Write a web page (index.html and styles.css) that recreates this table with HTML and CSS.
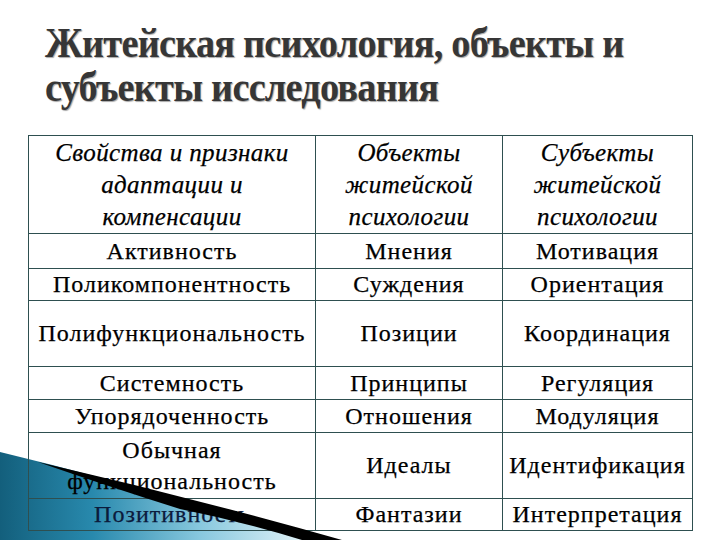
FILE: index.html
```html
<!DOCTYPE html>
<html lang="ru">
<head>
<meta charset="utf-8">
<link rel="stylesheet" href="styles.css">
</head>
<body>
<div class="slide">
  <svg class="wedge wedge-back" width="360" height="100" viewBox="0 440 360 100" xmlns="http://www.w3.org/2000/svg">
    <defs>
      <linearGradient id="wg" x1="0" y1="0" x2="1" y2="0">
        <stop offset="0" stop-color="#135f7c"/>
        <stop offset="0.3" stop-color="#2889ad"/>
        <stop offset="0.65" stop-color="#88c8de"/>
        <stop offset="1" stop-color="#e4f3f8"/>
      </linearGradient>
    </defs>
    <path d="M0 452 Q150 488 308 540 L0 540 Z" fill="url(#wg)"/>
  </svg>
  <h1 class="title">
    <span class="title-line">Житейская психология, объекты и</span>
    <span class="title-line">субъекты исследования</span>
  </h1>
  <table class="grid">
    <colgroup><col class="c1"><col class="c2"><col class="c3"></colgroup>
    <tr class="r-head">
      <th>Свойства и признаки<br>адаптации и<br>компенсации</th>
      <th>Объекты<br>житейской<br>психологии</th>
      <th>Субъекты<br>житейской<br>психологии</th>
    </tr>
    <tr class="r-a"><td>Активность</td><td>Мнения</td><td>Мотивация</td></tr>
    <tr class="r-b"><td>Поликомпонентность</td><td>Суждения</td><td>Ориентация</td></tr>
    <tr class="r-tall"><td>Полифункциональность</td><td>Позиции</td><td>Координация</td></tr>
    <tr class="r-c"><td>Системность</td><td>Принципы</td><td>Регуляция</td></tr>
    <tr class="r-c"><td>Упорядоченность</td><td>Отношения</td><td>Модуляция</td></tr>
    <tr class="r-tall"><td>Обычная<br>функциональность</td><td>Идеалы</td><td>Идентификация</td></tr>
    <tr class="r-b"><td class="navy">Позитивность</td><td>Фантазии</td><td>Интерпретация</td></tr>
  </table>
  <svg class="wedge wedge-front" width="360" height="100" viewBox="0 440 360 100" xmlns="http://www.w3.org/2000/svg">
    <path d="M38 462 Q190 497 342 540 L302 540 Q240 521 180 509 Q110 487 38 462 Z" fill="#000"/>
  </svg>
</div>
</body>
</html>
```

FILE: styles.css
```css
html, body {
  margin: 0;
  padding: 0;
  background: #fff;
}

.slide {
  position: relative;
  width: 720px;
  height: 540px;
  overflow: hidden;
  background: #fff;
}

.title {
  position: relative;
  z-index: 1;
  margin: 0;
  padding: 21px 0 0 45px;
  height: 113px;
  box-sizing: border-box;
  font-family: "Liberation Serif", "Times New Roman", serif;
  font-weight: bold;
  font-size: 42px;
  line-height: 44px;
  letter-spacing: -0.8px;
  color: #363636;
  text-shadow: 1px 1px 1px #a8a8a8;
  white-space: nowrap;
}

.title-line {
  display: block;
  height: 44px;
  transform: scaleX(0.91);
  transform-origin: left top;
}

.grid {
  position: relative;
  z-index: 1;
  margin-left: 28px;
  margin-top: 22px;
  width: 664px;
  border-collapse: collapse;
  table-layout: fixed;
  border: 1px solid #2e4f50;
  font-family: "Liberation Serif", "Times New Roman", serif;
  color: #000;
  background: transparent;
}

.c1 { width: 287px; }
.c2 { width: 187px; }
.c3 { width: 190px; }

.grid th, .grid td {
  border: 1px solid #2e4f50;
  padding: 0 2px;
  text-align: center;
  vertical-align: middle;
  font-size: 24px;
  line-height: 31px;
  letter-spacing: 1px;
  white-space: nowrap;
  -webkit-text-stroke: 0.25px #000;
}

.grid th {
  font-style: italic;
  font-weight: normal;
  font-size: 25px;
  line-height: 32px;
  letter-spacing: 0.4px;
}

.grid td.navy {
  color: #0b1b3c;
  -webkit-text-stroke: 0.25px #0b1b3c;
}

.r-head { height: 98px; }
.r-a { height: 35px; }
.r-b { height: 32px; }
.r-c { height: 33px; }
.r-tall { height: 66px; }

.wedge {
  position: absolute;
  left: 0;
  bottom: 0;
}

.wedge-back { z-index: 0; }
.wedge-front { z-index: 2; }
```
